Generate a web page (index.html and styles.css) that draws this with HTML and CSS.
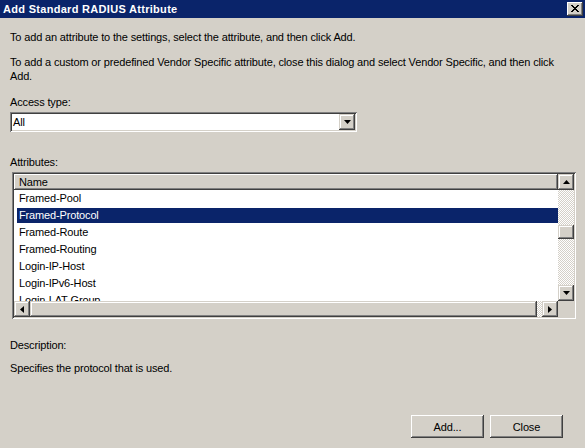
FILE: index.html
```html
<!DOCTYPE html>
<html>
<head>
<meta charset="utf-8">
<link rel="stylesheet" href="styles.css">
</head>
<body>
<div class="dialog">
  <div class="titlebar">
    <span class="title">Add Standard RADIUS Attribute</span>
    <span class="close-btn">
      <svg width="16" height="14" viewBox="0 0 16 14"><path d="M4 3h2v1h1v1h2V4h1V3h2v1h-1v1h-1v1h-1v1h1v1h1v1h1v1h-2V9H9V8H7v1H6v1H4V9h1V8h1V7h1V6H6V5H5V4H4z" fill="#000"/></svg>
    </span>
  </div>
  <div class="content">
    <p class="line first">To add an attribute to the settings, select the attribute, and then click Add.</p>
    <p class="line para">To add a custom or predefined Vendor Specific attribute, close this dialog and select Vendor Specific, and then click<br>Add.</p>
    <p class="line label access">Access type:</p>
    <div class="select">
      <span class="select-value">All</span>
      <span class="sb-btn drop">
        <svg width="7" height="4" viewBox="0 0 7 4"><path d="M0 0h7L3.5 4z" fill="#000"/></svg>
      </span>
    </div>
    <p class="line label attrs">Attributes:</p>
    <div class="list">
      <div class="list-top">
        <div class="list-main">
          <div class="header"><span>Name</span></div>
          <div class="rows">
            <div class="row"><span>Framed-Pool</span></div>
            <div class="row selected"><span>Framed-Protocol</span></div>
            <div class="row"><span>Framed-Route</span></div>
            <div class="row"><span>Framed-Routing</span></div>
            <div class="row"><span>Login-IP-Host</span></div>
            <div class="row"><span>Login-IPv6-Host</span></div>
            <div class="row"><span>Login-LAT-Group</span></div>
          </div>
        </div>
        <div class="vscroll">
          <span class="sb-btn">
            <svg width="7" height="4" viewBox="0 0 7 4"><path d="M3.5 0L7 4H0z" fill="#000"/></svg>
          </span>
          <div class="vtrack">
            <div class="vtrack-a"></div>
            <span class="sb-btn vthumb"></span>
            <div class="vtrack-b"></div>
          </div>
          <span class="sb-btn">
            <svg width="7" height="4" viewBox="0 0 7 4"><path d="M0 0h7L3.5 4z" fill="#000"/></svg>
          </span>
        </div>
      </div>
      <div class="hscroll">
        <span class="sb-btn">
          <svg width="4" height="7" viewBox="0 0 4 7"><path d="M0 3.5L4 0v7z" fill="#000"/></svg>
        </span>
        <span class="sb-btn hthumb"></span>
        <div class="htrack"></div>
        <span class="sb-btn">
          <svg width="4" height="7" viewBox="0 0 4 7"><path d="M4 3.5L0 0v7z" fill="#000"/></svg>
        </span>
        <div class="corner"></div>
      </div>
    </div>
    <p class="line label desc">Description:</p>
    <p class="line desc-text">Specifies the protocol that is used.</p>
    <div class="buttons">
      <span class="push">Add...</span>
      <span class="push">Close</span>
    </div>
  </div>
</div>
</body>
</html>
```
FILE: styles.css
```css
* { box-sizing: border-box; }
html, body { margin: 0; padding: 0; }
body {
  width: 585px;
  height: 448px;
  overflow: hidden;
  background: #d4d0c8;
  font-family: "Liberation Sans", Arial, sans-serif;
  font-size: 11px;
  letter-spacing: -0.15px;
  color: #000;
}
.dialog { width: 585px; height: 448px; }
.titlebar {
  height: 18px;
  background: #0a246a;
  display: flex;
  align-items: center;
  justify-content: space-between;
  padding: 0 2px 0 3px;
}
.title {
  color: #fff;
  font-weight: bold;
  font-size: 11px;
  letter-spacing: 0.3px;
}
.close-btn {
  width: 16px;
  height: 14px;
  background: #d4d0c8;
  box-shadow: inset -1px -1px #404040, inset 1px 1px #fff, inset -2px -2px #808080;
  display: flex;
}
.content { padding: 0 10px; display: flex; flex-direction: column; }
.line { margin: 0; line-height: 14px; }
.first { margin-top: 12px; }
.para { margin-top: 11px; white-space: nowrap; }
.access { margin-top: 12px; }
.select {
  margin-top: 3px;
  width: 347px;
  height: 20px;
  background: #fff;
  display: flex;
  align-items: center;
  justify-content: space-between;
  padding: 2px;
  box-shadow: inset 1px 1px #808080, inset -1px -1px #fff, inset 2px 2px #404040, inset -2px -2px #d4d0c8;
}
.select-value { padding-left: 1px; }
.sb-btn {
  width: 16px;
  height: 16px;
  flex: none;
  background: #d4d0c8;
  box-shadow: inset -1px -1px #404040, inset 1px 1px #d4d0c8, inset -2px -2px #808080, inset 2px 2px #fff;
  display: flex;
  align-items: center;
  justify-content: center;
}
.drop { height: 16px; }
.attrs { margin-top: 23px; }
.list {
  margin-top: 3px;
  margin-left: 2px;
  width: 564px;
  height: 147px;
  padding: 2px;
  background: #fff;
  box-shadow: inset 1px 1px #808080, inset -1px -1px #fff, inset 2px 2px #404040, inset -2px -2px #d4d0c8;
  display: flex;
  flex-direction: column;
}
.list-top { display: flex; height: 127px; }
.list-main { flex: 1; overflow: hidden; display: flex; flex-direction: column; }
.header {
  height: 16px;
  flex: none;
  background: #d4d0c8;
  box-shadow: inset -1px -1px #404040, inset 1px 1px #fff, inset -2px -2px #808080;
  display: flex;
  align-items: center;
  padding-left: 5px;
}
.rows { flex: 1; overflow: hidden; }
.row {
  height: 17px;
  padding: 1px 0 1px 3px;
  display: flex;
}
.row span {
  flex: 1;
  padding-left: 2px;
  line-height: 15px;
}
.selected span { background: #0a246a; color: #fff; }
.vscroll { width: 16px; display: flex; flex-direction: column; }
.vtrack { flex: 1; display: flex; flex-direction: column; }
.vtrack-a { height: 35px; }
.vtrack-b { flex: 1; }
.vtrack-a, .vtrack-b, .htrack {
  background: repeating-conic-gradient(#d4d0c8 0 25%, #fff 0 50%) 0 0 / 2px 2px;
}
.vthumb { height: 14px; }
.hscroll { display: flex; height: 16px; }
.hthumb { width: 507px; }
.htrack { flex: 1; }
.corner { width: 16px; background: #d4d0c8; }
.desc { margin-top: 19px; }
.desc-text { margin-top: 9px; }
.buttons {
  margin-top: 40px;
  display: flex;
  justify-content: flex-end;
  gap: 6px;
  padding-right: 12px;
}
.push {
  width: 73px;
  height: 23px;
  display: flex;
  align-items: center;
  justify-content: center;
  background: #d4d0c8;
  box-shadow: inset -1px -1px #404040, inset 1px 1px #fff, inset -2px -2px #808080;
}
```
